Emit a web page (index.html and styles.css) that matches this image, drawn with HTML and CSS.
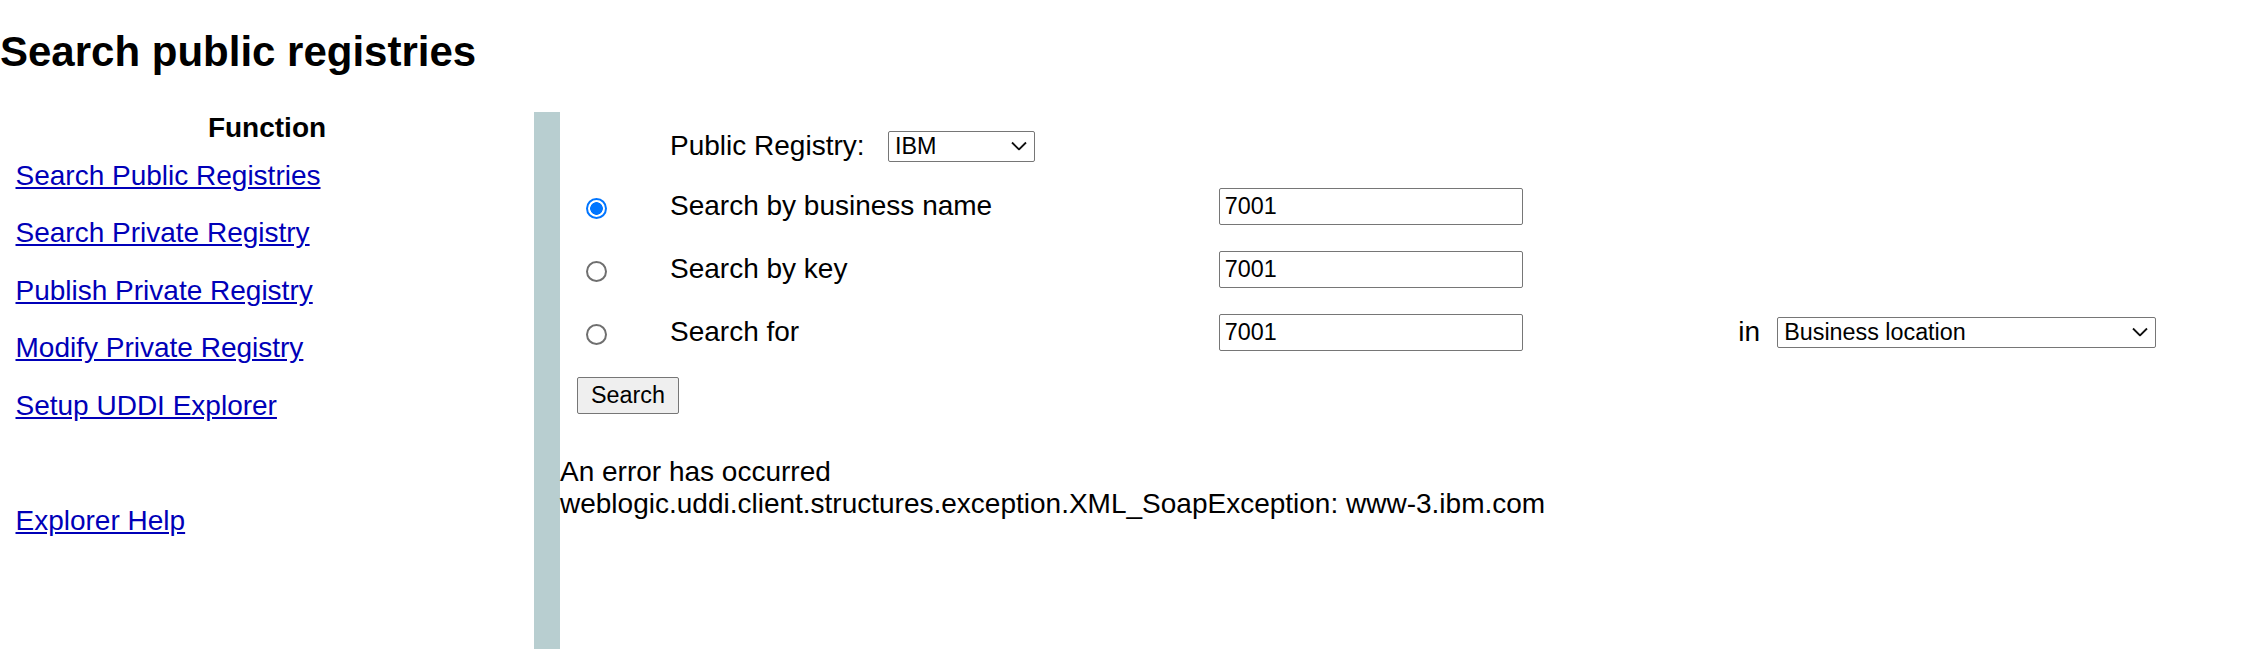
FILE: index.html
```html
<!DOCTYPE html>
<html lang="en">
<head>
<meta charset="utf-8">
<title>Search public registries</title>
<link rel="stylesheet" href="styles.css">
</head>
<body>
<h1 class="page-title">Search public registries</h1>
<div class="layout">
  <nav class="sidebar">
    <div class="sidebar-head">Function</div>
    <div class="nav-row"><a href="#">Search Public Registries</a></div>
    <div class="nav-row"><a href="#">Search Private Registry</a></div>
    <div class="nav-row"><a href="#">Publish Private Registry</a></div>
    <div class="nav-row"><a href="#">Modify Private Registry</a></div>
    <div class="nav-row"><a href="#">Setup UDDI Explorer</a></div>
    <div class="nav-row"></div>
    <div class="nav-row"><a href="#">Explorer Help</a></div>
  </nav>
  <div class="divider"></div>
  <main class="content">
    <form class="search-form">
      <div class="form-grid">
        <div class="cell label-cell row-0">Public Registry:
          <span class="select-wrap registry-select">
            <select><option>IBM</option></select>
            <svg class="chevron" width="16" height="9" viewBox="0 0 16 9"><polyline points="1,1 8,8 15,1" fill="none" stroke="#111" stroke-width="1.8"/></svg>
          </span>
        </div>

        <div class="cell radio-cell"><input class="radio" type="radio" name="mode" checked></div>
        <div class="cell label-cell">Search by business name</div>
        <div class="cell"><input class="text-input" type="text" value="7001"></div>
        <div class="cell"></div>
        <div class="cell"></div>

        <div class="cell radio-cell"><input class="radio" type="radio" name="mode"></div>
        <div class="cell label-cell">Search by key</div>
        <div class="cell"><input class="text-input" type="text" value="7001"></div>
        <div class="cell"></div>
        <div class="cell"></div>

        <div class="cell radio-cell"><input class="radio" type="radio" name="mode"></div>
        <div class="cell label-cell">Search for</div>
        <div class="cell"><input class="text-input" type="text" value="7001"></div>
        <div class="cell label-cell">in</div>
        <div class="cell">
          <span class="select-wrap location-select">
            <select><option>Business location</option></select>
            <svg class="chevron" width="16" height="9" viewBox="0 0 16 9"><polyline points="1,1 8,8 15,1" fill="none" stroke="#111" stroke-width="1.8"/></svg>
          </span>
        </div>
      </div>
      <button type="button" class="search-button">Search</button>
    </form>
    <div class="error-text">An error has occurred<br>weblogic.uddi.client.structures.exception.XML_SoapException: www-3.ibm.com</div>
  </main>
</div>
</body>
</html>
```

FILE: styles.css
```css
html, body {
  margin: 0;
  padding: 0;
  background: #ffffff;
}

body {
  font-family: "Liberation Sans", Arial, sans-serif;
  font-size: 28px;
  color: #000000;
  overflow: hidden;
}

.page-title {
  font-size: 42px;
  font-weight: bold;
  line-height: 48px;
  margin: 28px 0 36px 0;
}

.layout {
  display: flex;
  height: calc(100vh - 112px);
}

.sidebar {
  width: 534px;
  flex: 0 0 534px;
  display: flex;
  flex-direction: column;
}

.sidebar-head {
  font-weight: bold;
  text-align: center;
  line-height: 32px;
  height: 35px;
}

.nav-row {
  height: 57.5px;
  display: flex;
  align-items: center;
  padding-left: 15.5px;
  line-height: 32px;
}

.nav-row a {
  color: #0000b8;
  text-decoration: underline;
}

.divider {
  flex: 0 0 26px;
  width: 26px;
  background: #b8ced0;
}

.content {
  flex: 1;
  display: flex;
  flex-direction: column;
  align-items: flex-start;
}

.search-form {
  display: flex;
  flex-direction: column;
  align-items: flex-start;
}

.form-grid {
  margin-top: 5.5px;
  display: grid;
  grid-template-columns: 110px 548.8px 519.5px 38.9px auto;
  grid-template-rows: 57px 63px 63px 63px;
  align-items: center;
}

.cell {
  display: flex;
  align-items: center;
  line-height: 32px;
}

.row-0 {
  grid-column: 2 / 4;
}

.row-0 + .radio-cell {
  grid-column: 1;
}

.radio-cell {
  padding-left: 25.5px;
  padding-top: 4.5px;
}

.radio {
  appearance: none;
  -webkit-appearance: none;
  box-sizing: border-box;
  width: 21px;
  height: 21px;
  margin: 0;
  border: 2px solid #6f6f6f;
  border-radius: 50%;
  background: #ffffff;
}

.radio:checked {
  border: 2px solid #0075ff;
  background: radial-gradient(circle, #0075ff 0 6px, #ffffff 6.6px);
}

.text-input {
  box-sizing: border-box;
  width: 304px;
  height: 37px;
  margin: 0;
  padding: 0 5px;
  border: 1px solid #767676;
  border-radius: 2px;
  font-family: "Liberation Sans", Arial, sans-serif;
  font-size: 23.33px;
  color: #000000;
  background: #ffffff;
}

.select-wrap {
  position: relative;
  display: inline-flex;
}

.registry-select {
  margin-left: 23.5px;
}

.select-wrap select {
  appearance: none;
  -webkit-appearance: none;
  box-sizing: border-box;
  height: 31px;
  margin: 0;
  padding: 0 30px 0 6px;
  border: 1px solid #767676;
  border-radius: 2px;
  background: #ffffff;
  font-family: "Liberation Sans", Arial, sans-serif;
  font-size: 23.33px;
  color: #000000;
}

.registry-select select {
  width: 146.6px;
}

.location-select select {
  width: 378.6px;
}

.chevron {
  position: absolute;
  right: 7.5px;
  top: 50%;
  transform: translateY(-50%);
  pointer-events: none;
}

.search-button {
  box-sizing: border-box;
  margin: 13px 0 0 17.3px;
  width: 101.4px;
  height: 37px;
  padding: 0;
  border: 1px solid #767676;
  border-radius: 2px;
  background: #efefef;
  font-family: "Liberation Sans", Arial, sans-serif;
  font-size: 23.33px;
  color: #000000;
}

.error-text {
  margin-top: 42.8px;
  line-height: 32px;
}
```
